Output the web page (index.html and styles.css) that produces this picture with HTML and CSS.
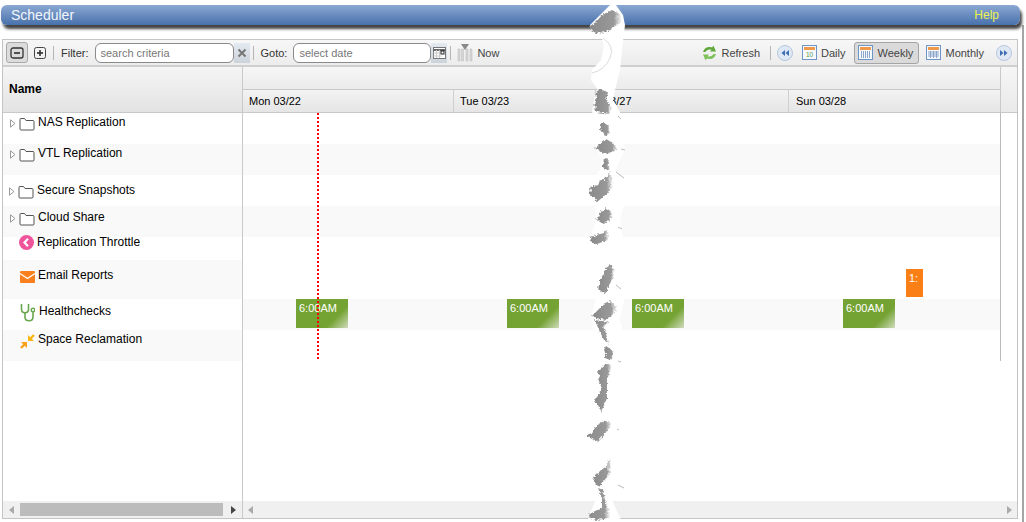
FILE: index.html
```html
<!DOCTYPE html>
<html lang="en">
<head>
  <meta charset="UTF-8">
  <title>Scheduler</title>
  <link rel="stylesheet" href="styles.css">
</head>
<body>

<div class="titlebar">
  <span class="title">Scheduler</span>
  <span class="help">Help</span>
</div>

<div class="content">
  <div class="panel">

    <div class="toolbar">
      <button class="tool active"><svg width="14" height="14" viewBox="0 0 14 14"><rect x="1" y="2" width="12" height="10" rx="2" fill="none" stroke="#333" stroke-width="1.3"/><path d="M4 7h6" stroke="#222" stroke-width="1.5"/></svg></button>
      <button class="tool"><svg width="14" height="14" viewBox="0 0 14 14"><rect x="1.5" y="1.5" width="11" height="11" rx="2" fill="none" stroke="#444"/><path d="M4 7h6M7 4v6" stroke="#222" stroke-width="1.4"/></svg></button>
      <span class="sep"></span>
      <label class="lbl">Filter:</label>
      <span class="field"><span class="input input-wide">search criteria</span><span class="addon"><svg width="10" height="10" viewBox="0 0 10 10"><path d="M1.5 1.5l7 7M8.5 1.5l-7 7" stroke="#777" stroke-width="2"/></svg></span></span>
      <span class="sep"></span>
      <label class="lbl">Goto:</label>
      <span class="field"><span class="input">select date</span><span class="addon"><svg width="13" height="12" viewBox="0 0 13 12"><rect x=".5" y=".5" width="12" height="11" fill="#fff" stroke="#777"/><path d="M.5 3h12" stroke="#666" stroke-width="2"/><path d="M3.5 3v8M6.5 3v8M.5 6h8M.5 9h8" stroke="#ccc"/><rect x="8" y="4" width="3" height="3" fill="#fff" stroke="#222"/></svg></span></span>
      <span class="sep"></span>
      <span class="now-icon"><svg width="16" height="19" viewBox="0 0 16 19"><path d="M1 6h2v12H1zM4.500 6h2v12h-2zM9 6h2v12H9zM13 6h2v12h-2z" fill="#d6d6d6" stroke="#bbb" stroke-width=".5"/><path d="M4 1h8l-4 6z" fill="#8a8a8a"/></svg></span>
      <span class="tool-text">Now</span>

      <span class="spacer"></span>

      <span class="tool-icon"><svg width="17" height="16" viewBox="0 0 17 16"><path d="M2 7C3 3 7 1 11 2.500L12.500 .8 15 6.500 9 6.500 10.500 4.800C8 4 5.500 4.800 4.500 7z" fill="#5fa93c"/><path d="M15 9C14 13 10 15 6 13.500L4.500 15.200 2 9.500 8 9.500 6.500 11.200C9 12 11.500 11.200 12.500 9z" fill="#7cc159"/></svg></span>
      <span class="tool-text txt-refresh">Refresh</span>
      <span class="sep sep-nav"></span>
      <span class="round"><svg width="16" height="16" viewBox="0 0 16 16"><circle cx="8" cy="8" r="7.500" fill="#dfe9f5" stroke="#b5c7dd"/><path d="M8 5v6L4.500 8zM12 5v6L8.500 8z" fill="#3f6fb0"/></svg></span>
      <span class="cal cal-daily"><svg width="15" height="15" viewBox="0 0 15 15"><rect x=".5" y=".5" width="14" height="14" fill="#f6f9fd" stroke="#6e95c6"/><rect x="2" y="2" width="11" height="3" fill="#ef9a4b"/><text x="7.500" y="12" font-size="6.500" text-anchor="middle" fill="#5a9a3c" font-family="Liberation Sans, sans-serif">10</text></svg></span>
      <span class="tool-text txt-daily">Daily</span>
      <button class="view active"><svg width="15" height="15" viewBox="0 0 15 15"><rect x=".5" y=".5" width="14" height="14" fill="#f6f9fd" stroke="#6e95c6"/><rect x="2" y="2" width="11" height="3" fill="#ef9a4b"/><path d="M3.500 6v7M5.500 6v7M7.500 6v7M9.500 6v7M11.500 6v7" stroke="#8aa5c8"/></svg><span>Weekly</span></button>
      <span class="cal cal-monthly"><svg width="15" height="15" viewBox="0 0 15 15"><rect x=".5" y=".5" width="14" height="14" fill="#f6f9fd" stroke="#6e95c6"/><rect x="2" y="2" width="11" height="3" fill="#ef9a4b"/><path d="M2 7h11M2 9h11M2 11h11M4.500 6v7M7.500 6v7M10.500 6v7" stroke="#8aa5c8"/></svg></span>
      <span class="tool-text txt-monthly">Monthly</span>
      <span class="round round-next"><svg width="16" height="16" viewBox="0 0 16 16"><circle cx="8" cy="8" r="7.500" fill="#dfe9f5" stroke="#b5c7dd"/><path d="M4 5v6l3.500-3zM8 5v6l3.500-3z" fill="#3f6fb0"/></svg></span>
    </div>

    <div class="grid">
      <div class="side">
        <div class="name-head">Name</div>
        <div class="tree">
          <div class="row pad-9">
            <svg class="arrow" width="6" height="9" viewBox="0 0 6 9"><path d="M.5.800L5 4.500.5 8.200z" fill="#fff" stroke="#999"/></svg>
            <svg class="folder" width="16" height="14" viewBox="0 0 16 14"><path d="M1 2.500q0-1 1-1h3.500l1.500 2h7q1 0 1 1v7.500q0 1-1 1H2q-1 0-1-1z" fill="#fff" stroke="#555"/></svg>
            <span class="text">NAS Replication</span>
          </div>
          <div class="row stripe pad-9">
            <svg class="arrow" width="6" height="9" viewBox="0 0 6 9"><path d="M.5.800L5 4.500.5 8.200z" fill="#fff" stroke="#999"/></svg>
            <svg class="folder" width="16" height="14" viewBox="0 0 16 14"><path d="M1 2.500q0-1 1-1h3.500l1.500 2h7q1 0 1 1v7.500q0 1-1 1H2q-1 0-1-1z" fill="#fff" stroke="#555"/></svg>
            <span class="text">VTL Replication</span>
          </div>
          <div class="row pad-15 shift-l">
            <svg class="arrow" width="6" height="9" viewBox="0 0 6 9"><path d="M.5.800L5 4.500.5 8.200z" fill="#fff" stroke="#999"/></svg>
            <svg class="folder" width="16" height="14" viewBox="0 0 16 14"><path d="M1 2.500q0-1 1-1h3.500l1.500 2h7q1 0 1 1v7.500q0 1-1 1H2q-1 0-1-1z" fill="#fff" stroke="#555"/></svg>
            <span class="text">Secure Snapshots</span>
          </div>
          <div class="row stripe pad-11">
            <svg class="arrow" width="6" height="9" viewBox="0 0 6 9"><path d="M.5.800L5 4.500.5 8.200z" fill="#fff" stroke="#999"/></svg>
            <svg class="folder" width="16" height="14" viewBox="0 0 16 14"><path d="M1 2.500q0-1 1-1h3.500l1.500 2h7q1 0 1 1v7.500q0 1-1 1H2q-1 0-1-1z" fill="#fff" stroke="#555"/></svg>
            <span class="text">Cloud Share</span>
          </div>
          <div class="row leaf short raised">
            <svg class="leaf-icon" width="15" height="15" viewBox="0 0 15 15"><circle cx="7.500" cy="7.500" r="7.500" fill="#f0549b"/><path d="M9 3.800L5.500 7.500 9 11.200" fill="none" stroke="#fff" stroke-width="2.200"/></svg>
            <span class="text">Replication Throttle</span>
          </div>
          <div class="row stripe leaf tall pad-15">
            <svg class="leaf-icon mail" width="15" height="12" viewBox="0 0 15 12"><rect width="15" height="12" rx="1" fill="#f9801c"/><path d="M0 2.500l7.500 5 7.500-5" fill="none" stroke="#fff" stroke-width="1.300"/></svg>
            <span class="text">Email Reports</span>
          </div>
          <div class="row leaf pad-12 shift-r">
            <svg class="leaf-icon steth" width="15" height="19" viewBox="0 0 15 19"><path d="M1.500 1v5c0 5 7 5 7 0V1" fill="none" stroke="#6aa84f" stroke-width="1.600"/><path d="M5 10v4c0 5 8 5 8 0V9" fill="none" stroke="#6aa84f" stroke-width="1.600"/><circle cx="13" cy="7" r="1.800" fill="none" stroke="#6aa84f" stroke-width="1.400"/></svg>
            <span class="text">Healthchecks</span>
          </div>
          <div class="row stripe leaf pad-9">
            <svg class="leaf-icon shrink" width="15" height="15" viewBox="0 0 15 15"><path d="M14 1L10 5" stroke="#fbb514" stroke-width="2.400"/><polygon points="8,1 8,7 14,7" fill="#fbb514"/><path d="M1 14l4-4" stroke="#f9a11b" stroke-width="2.400"/><polygon points="7,14 7,8 1,8" fill="#f9a11b"/></svg>
            <span class="text">Space Reclamation</span>
          </div>
        </div>
        <div class="hbar">
          <span class="tri-l"></span>
          <span class="thumb"></span>
          <span class="tri-r dark"></span>
        </div>
      </div>

      <div class="timeline">
        <div class="time-head">
          <div class="head-top"></div>
          <div class="head-days">
            <div class="day day-mon">Mon 03/22</div>
            <div class="day day-tue">Tue 03/23</div>
            <div class="day day-sat">03/27</div>
            <div class="day day-sun">Sun 03/28</div>
          </div>
        </div>
        <div class="time-body">
          <div class="chart">
            <div class="band"></div>
            <div class="band stripe"></div>
            <div class="band"></div>
            <div class="band stripe"></div>
            <div class="band band-wide"></div>
            <div class="band stripe"></div>
            <div class="band"></div>
            <div class="today"></div>
            <div class="event ev-1">6:00AM</div>
            <div class="event ev-2">6:00AM</div>
            <div class="event ev-3">6:00AM</div>
            <div class="event ev-4">6:00AM</div>
            <div class="event-orange">1:</div>
          </div>
        </div>
        <div class="hbar hbar-wide">
          <span class="tri-l"></span>
          <span class="tri-r"></span>
        </div>
      </div>
    </div>

  </div>
</div>

<!-- torn edge over the page -->
<svg class="tear" width="1026" height="522" viewBox="0 0 1026 522">
  <defs>
    <linearGradient id="tearGray">
      <stop offset="0" stop-color="#8a8a8a"/>
      <stop offset=".75" stop-color="#999"/>
      <stop offset="1" stop-color="#fff"/>
    </linearGradient>
    <filter id="rough" x="-20%" y="-5%" width="140%" height="110%">
      <feTurbulence type="fractalNoise" baseFrequency=".45" numOctaves="2" seed="4"/>
      <feDisplacementMap in="SourceGraphic" scale="4" xChannelSelector="R" yChannelSelector="G"/>
    </filter>
  </defs>
  <polygon fill="#fff" points="610,5 600,15 590,25 592,33 602,38 604,46 601,60 592,70 591,80 598,90 594,100 592,112 598,122 600,135 595,147 602,158 600,170 590,185 592,200 596,212 596,222 590,235 594,245 597,265 598,290 592,315 594,335 604,350 596,375 598,410 586,432 592,470 598,495 588,518 590,522 622,522 612,500 625,485 618,440 622,420 618,380 625,340 620,320 624,300 612,270 625,250 620,220 628,190 615,170 625,150 620,130 620,112 613,100 615,90 620,70 622,50 625,25 623,15 616,5"/>
  <path d="M603 38q12 8 7 20t-18 15" fill="none" stroke="#ccc" stroke-width=".7"/>
  <g fill="url(#tearGray)" filter="url(#rough)">
    <polygon points="612,10 602,15 596,22 590,26 591,30 596,33 606,32 612,28 622,22 620,14"/>
    <polygon points="599,89 597,93 595,94 597,97 595,100 596,103 594,105 596,107 594,109 597,112 609,114 612,108 606,100 608,92"/>
    <polygon points="603,122 600,124 601,127 600,130 603,133 605,136 610,133 609,126"/>
    <polygon points="606,139 600,144 595,148 600,151 605,154 618,150 613,143"/>
    <polygon points="606,158 603,160 604,163 602,166 606,170 610,170 609,162"/>
    <polygon points="610,172 606,178 600,181 597,185 590,187 591,191 589,193 592,197 595,198 597,202 609,192 613,184"/>
    <polygon points="606,208 602,211 599,213 600,216 596,218 600,222 604,224 613,217 612,212"/>
    <polygon points="606,229 603,233 597,235 590,237 591,241 593,243 597,244 608,240 609,232"/>
    <polygon points="610,265 606,268 604,272 603,277 600,279 600,284 597,287 602,292 606,293 615,272 612,266"/>
    <polygon points="610,301 602,306 598,310 595,313 592,316 597,318 605,320 615,313 617,307"/>
    <polygon points="594,320 597,325 599,330 604,340 610,345 603,326 610,322"/>
    <polygon points="606,346 604,350 606,354 605,358 610,360 614,352 609,348"/>
    <polygon points="607,363 601,368 597,372 600,376 598,380 601,385 600,392 598,396 594,400 598,405 601,412 607,398 607,380 612,366"/>
    <polygon points="606,420 600,423 594,429 592,433 586,435 590,438 594,440 597,442 610,428 612,423"/>
    <polygon points="611,458 608,461 607,466 601,470 595,476 593,480 596,484 599,487 611,472"/>
    <polygon points="598,488 600,493 602,498 602,508 595,511 590,514 588,517 596,520 610,518 610,512 605,500 603,490"/>
  </g>
  <path d="M618 116l3 3M621 149l4 1M616 172l8 6M618 227l4 2M616 285l5 4M618 361l3 1M617 429l2 1M618 485l6 3" fill="none" stroke="#bbb"/>
</svg>

</body>
</html>
```

FILE: styles.css
```css
html, body {
  margin: 0;
  padding: 0;
}
body {
  position: relative;
  width: 1026px;
  height: 522px;
  overflow: hidden;
  background: #fff;
  font-family: "Liberation Sans", Arial, sans-serif;
  font-size: 11px;
  color: #000;
}

.titlebar {
  display: flex;
  justify-content: space-between;
  align-items: center;
  box-sizing: border-box;
  width: 1019px;
  height: 20px;
  margin: 5px 0 0 1px;
  padding: 0 21px 0 10px;
  border-radius: 6px;
  background: linear-gradient(#8ba8d2, #4871ac);
  box-shadow: 2px 4px 3px #444;
  position: relative;
}
.title {
  font-size: 14px;
  color: #f2f6fc;
}
.help {
  font-size: 12px;
  color: #eef250;
}

.content {
  box-sizing: border-box;
  width: 1024px;
  height: 497px;
  padding: 14px 0 0 2px;
  border-right: 2px solid #a5a5a5;
}
.panel {
  display: flex;
  flex-direction: column;
  box-sizing: border-box;
  width: 1016px;
  height: 480px;
  border: 1px solid #c6c3c3;
}

.toolbar {
  display: flex;
  align-items: center;
  box-sizing: border-box;
  height: 27px;
  flex: none;
  padding-left: 3px;
  border-bottom: 2px solid #cfcfcf;
  background: linear-gradient(#f7f7f7, #ececec);
  color: #333;
}
.tool {
  display: flex;
  align-items: center;
  justify-content: center;
  box-sizing: border-box;
  width: 22px;
  height: 21px;
  padding: 0;
  border: 1px solid transparent;
  border-radius: 3px;
  background: none;
}
.tool + .tool {
  margin-left: 1px;
}
.tool.active {
  border-color: #a9a9a9;
  background: #dcdcdc;
}
.sep {
  width: 1px;
  height: 14px;
  margin-left: 3px;
  background: #b5b5b5;
}
.tool + .sep {
  margin-left: 2px;
}
.lbl {
  margin: 0 6px 0 7px;
  color: #333;
}
.field {
  display: flex;
  height: 20px;
}
.input {
  box-sizing: border-box;
  width: 138px;
  height: 20px;
  padding: 3px 0 0 5px;
  border: 1px solid #8a8a8a;
  border-radius: 6px;
  background: #fff;
  color: #777;
}
.input-wide {
  width: 139px;
}
.addon {
  display: flex;
  align-items: center;
  justify-content: center;
  width: 16px;
  height: 20px;
  background: linear-gradient(#e4eaf2, #cdd3da);
}
.now-icon {
  margin-left: 6px;
  height: 19px;
}
.tool-text {
  color: #444;
}
.now-icon + .tool-text {
  margin-left: 4px;
}
.spacer {
  flex: 1;
}
.tool-icon {
  display: flex;
  height: 16px;
}
.txt-refresh {
  margin-left: 3px;
}
.sep-nav {
  margin-left: 10px;
}
.round {
  display: flex;
  height: 16px;
  margin-left: 6px;
}
.cal {
  display: flex;
  height: 15px;
}
.cal-daily {
  margin-left: 9px;
}
.txt-daily {
  margin-left: 4px;
}
.view {
  display: flex;
  align-items: center;
  gap: 4px;
  box-sizing: border-box;
  width: 65px;
  height: 22px;
  margin-left: 9px;
  padding: 0 0 0 3px;
  border: 1px solid #a5a5a5;
  border-radius: 3px;
  background: #dadada;
  font: inherit;
  color: #444;
}
.cal-monthly {
  margin-left: 7px;
}
.txt-monthly {
  margin-left: 4px;
}
.round-next {
  margin: 0 5px 0 12px;
}

.grid {
  display: flex;
  flex: 1;
  min-height: 0;
}
.side {
  display: flex;
  flex-direction: column;
  flex: none;
  width: 240px;
  border-right: 1px solid #c9c9c9;
  box-sizing: border-box;
}
.name-head {
  flex: none;
  box-sizing: border-box;
  height: 46px;
  padding: 15px 0 0 6px;
  border-bottom: 1px solid #c9c9c9;
  background: linear-gradient(#f5f5f5, #e3e3e3);
  font-size: 12px;
  font-weight: bold;
}
.tree {
  flex: 1;
}
.row {
  display: flex;
  align-items: flex-start;
  box-sizing: border-box;
  height: 31px;
  padding-left: 7px;
  font-size: 12px;
  white-space: nowrap;
}
.row.short {
  height: 23px;
}
.row.tall {
  height: 39px;
}
.stripe {
  background: #f9f9f9;
}
.pad-9 { padding-top: 2px; }
.pad-11 { padding-top: 4px; }
.pad-12 { padding-top: 5px; }
.pad-15 { padding-top: 8px; }
.raised > * { margin-top: -2px; }
.shift-l .arrow { margin-left: -1px; }
.shift-l .text { margin-left: 3px; }
.shift-r .text { margin-left: 4px; }
.arrow {
  flex: none;
  margin-top: 4px;
}
.folder {
  flex: none;
  margin: 2px 0 0 3px;
}
.text {
  margin-left: 3px;
  line-height: 14px;
}
.leaf {
  padding-left: 16px;
}
.mail {
  margin: 3px 0 0 1px;
}
.steth {
  margin: -1px 0 0 1px;
}
.shrink {
  margin: 2px 0 0 1px;
}
.hbar {
  display: flex;
  align-items: center;
  flex: none;
  box-sizing: border-box;
  height: 17px;
  padding: 0 6px;
  background: #f0f0f0;
}
.thumb {
  width: 204px;
  height: 13px;
  margin: 0 8px 0 6px;
  background: #bcbcbc;
}
.tri-l,
.tri-r {
  width: 0;
  height: 0;
  border-top: 4px solid transparent;
  border-bottom: 4px solid transparent;
}
.tri-l {
  border-right: 5px solid #aaa;
}
.tri-r {
  border-left: 5px solid #aaa;
}
.tri-r.dark {
  border-left-color: #444;
}
.hbar-wide {
  justify-content: space-between;
  padding: 0 5px;
}

.timeline {
  display: flex;
  flex-direction: column;
  flex: 1;
  min-width: 0;
}
.time-head {
  flex: none;
  box-sizing: border-box;
  height: 46px;
  border-bottom: 1px solid #c9c9c9;
  background: linear-gradient(#f6f6f6, #e9e9e9);
}
.head-top {
  box-sizing: border-box;
  width: 758px;
  height: 23px;
  border-right: 1px solid #c9c9c9;
  border-bottom: 1px solid #c9c9c9;
  background: linear-gradient(#f6f6f6, #ebebeb);
}
.head-days {
  display: flex;
  box-sizing: border-box;
  width: 758px;
  height: 22px;
  border-right: 1px solid #c9c9c9;
  background: linear-gradient(#f3f3f3, #e5e5e5);
}
.day {
  flex: none;
  box-sizing: border-box;
  padding: 5px 0 0 6px;
  border-right: 1px solid #d0d0d0;
}
.day-mon { width: 211px; }
.day-tue { width: 142px; }
.day-sat { width: 193px; padding-left: 8px; }
.day-sun { width: 211px; border-right: 0; padding-left: 7px; }
.time-body {
  flex: 1;
  min-height: 0;
}
.chart {
  position: relative;
  box-sizing: border-box;
  width: 758px;
  border-right: 1px solid #bbb;
}
.band {
  height: 31px;
}
.band-wide {
  height: 62px;
}
.today {
  position: absolute;
  z-index: 1;
  top: 0;
  left: 74px;
  width: 2px;
  height: 248px;
  background: repeating-linear-gradient(#f00 0, #f00 2px, transparent 2px, transparent 4px);
}
.event {
  position: absolute;
  top: 186px;
  box-sizing: border-box;
  width: 52px;
  height: 29px;
  padding: 3px 0 0 3px;
  background: linear-gradient(135deg, #74a334 0, #74a334 calc(100% - 16px), #d0dcbd 100%);
  color: #fff;
  white-space: nowrap;
}
.ev-1 { left: 53px; }
.ev-2 { left: 264px; }
.ev-3 { left: 389px; }
.ev-4 { left: 600px; }
.event-orange {
  position: absolute;
  top: 156px;
  left: 663px;
  box-sizing: border-box;
  width: 17px;
  height: 28px;
  padding: 3px 0 0 3px;
  background: #f97f16;
  color: #fff;
}

.tear {
  position: absolute;
  top: 0;
  left: 0;
  pointer-events: none;
}
```
